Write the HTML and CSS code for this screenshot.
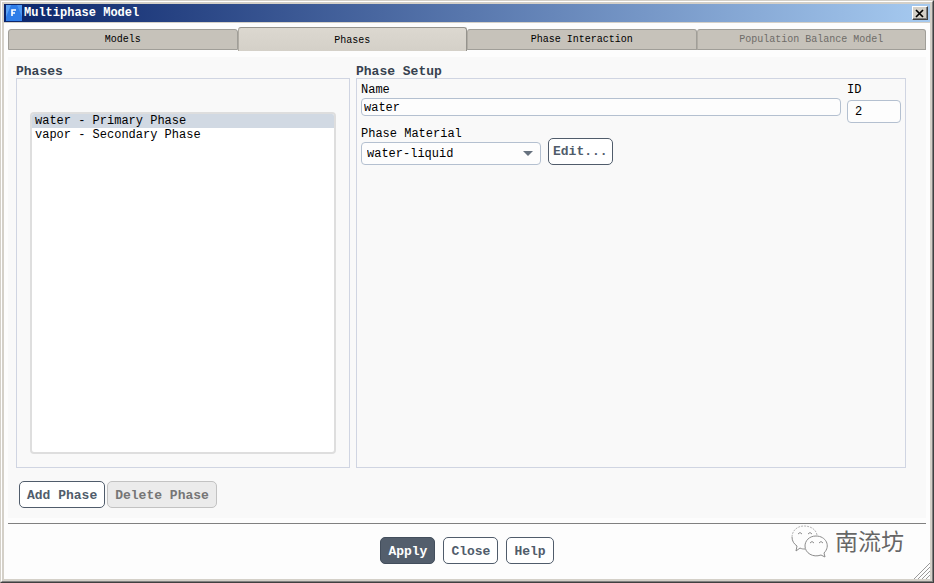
FILE: index.html
```html
<!DOCTYPE html>
<html lang="en">
<head>
<meta charset="utf-8">
<title>Multiphase Model</title>
<link rel="stylesheet" href="styles.css">
</head>
<body>
<div class="window">
  <header class="titlebar">
    <svg class="app-icon" viewBox="0 0 16 16" aria-hidden="true">
      <rect width="16" height="16" fill="#2f7de8"/>
      <path d="M0 0h5L0 12z" fill="#5aa2f5"/>
      <path d="M11 0h5v12z" fill="#4a96f2"/>
      <path d="M6 11V5h4M6 8h3" fill="none" stroke="#fff" stroke-width="1.6"/>
    </svg>
    <h1 class="title">Multiphase Model</h1>
    <button class="window-close" type="button" aria-label="Close window">
      <svg viewBox="0 0 10 9" aria-hidden="true"><path d="M1 1l7 7M8 1l-7 7" stroke="#000" stroke-width="1.7"/></svg>
    </button>
  </header>
  <nav class="tabs" role="tablist">
    <button class="tab" type="button" role="tab">Models</button>
    <button class="tab tab-active" type="button" role="tab" aria-selected="true">Phases</button>
    <button class="tab" type="button" role="tab">Phase Interaction</button>
    <button class="tab" type="button" role="tab" disabled>Population Balance Model</button>
  </nav>
  <main class="panel">
    <div class="columns">
      <section class="column column-phases">
        <h2 class="heading" id="phases-heading">Phases</h2>
        <div class="group group-list">
          <select class="phase-list" size="2" aria-labelledby="phases-heading">
            <option selected>water - Primary Phase</option>
            <option>vapor - Secondary Phase</option>
          </select>
        </div>
      </section>
      <section class="column column-setup">
        <h2 class="heading">Phase Setup</h2>
        <div class="group group-setup">
          <div class="row">
            <div class="field field-name">
              <label for="name">Name</label>
              <input class="input" id="name" type="text" value="water">
            </div>
            <div class="field field-id">
              <label for="phase-id">ID</label>
              <input class="input input-tall" id="phase-id" type="text" value="2">
            </div>
          </div>
          <div class="row row-material">
            <div class="field field-material">
              <label for="material">Phase Material</label>
              <div class="dropdown">
                <select class="input input-tall" id="material"><option>water-liquid</option></select>
              </div>
            </div>
            <button class="button button-edit" type="button">Edit...</button>
          </div>
        </div>
      </section>
    </div>
    <div class="list-actions">
      <button class="button" type="button">Add Phase</button>
      <button class="button" type="button" disabled>Delete Phase</button>
    </div>
  </main>
  <footer class="footer">
    <button class="button button-primary" type="button">Apply</button>
    <button class="button" type="button">Close</button>
    <button class="button" type="button">Help</button>
    <div class="watermark">
      <svg class="watermark-icon" viewBox="0 0 38 34" aria-hidden="true" fill="none" stroke="#8c8c8c">
        <path d="M26 10C25 4 19 1 13 1 6 1 1 6 1 12" stroke="#b4b4b4" stroke-dasharray="2 1"/>
        <path d="M1 12c0 4 2 7 5 9l-1 5 4-3c2 1 3 1 5 1"/>
        <path d="M25 11c-7 0-11 5-11 10 0 7 8 12 16 9l4 2-1-4c7-7 2-17-8-17z" fill="#fdfdfd"/>
        <path d="M7 9q2-3 4 0M17 9q2-3 4 0M19 18q2-3 4 0M28 18q2-3 4 0"/>
      </svg>
      <span lang="zh">南流坊</span>
    </div>
    <svg class="grip" viewBox="0 0 16 16" aria-hidden="true"><path d="M0 16L16 0M4 16L16 4M8 16l8-8M12 16l4-4" stroke="#999"/></svg>
  </footer>
</div>
</body>
</html>
```
FILE: styles.css
```css
* {
  box-sizing: border-box;
}

body {
  margin: 0;
  min-height: 100vh;
  display: flex;
  font: 12px/13px "Liberation Mono", monospace;
  color: #000;
  background: #d4d0c8;
  border: 1px solid;
  border-color: #d4d0c8 #404040 #404040 #d4d0c8;
}

button,
input,
select {
  font: inherit;
  color: inherit;
  margin: 0;
}

.window {
  flex: 1;
  min-width: 0;
  display: flex;
  flex-direction: column;
  padding: 2px;
  border: 1px solid;
  border-color: #fff #808080 #808080 #fff;
  background: linear-gradient(#fdfdfd, #fdfdfd) content-box;
}

.titlebar {
  display: flex;
  align-items: center;
  height: 19px;
  padding: 0 2px;
  border-bottom: 1px solid #d4d0c8;
  background: linear-gradient(to right, #0a246a, #a6caf0);
}

.app-icon {
  width: 16px;
  height: 16px;
}

.title {
  flex: 1;
  margin: 0 2px;
  font-size: 12px;
  font-weight: bold;
  color: #fff;
}

.window-close {
  display: flex;
  align-items: center;
  justify-content: center;
  width: 16px;
  height: 14px;
  padding: 0;
  background: #d4d0c8;
  border: 1px solid;
  border-color: #fff #404040 #404040 #fff;
  box-shadow: inset -1px -1px #808080;
}

.window-close svg {
  width: 10px;
  height: 9px;
}

.tabs {
  display: flex;
  align-items: center;
  height: 28px;
  padding: 4px 4px 0;
}

.tab {
  flex: 1;
  height: 21px;
  padding: 1px 0 0;
  font-size: 10px;
  background: #c6c2ba;
  border: 1px solid #a09e98;
  border-radius: 3px 3px 0 0;
}

.tab + .tab {
  border-left-color: #b0aca4;
}

.tab-active {
  height: 24px;
  background: linear-gradient(#dcd8d0, #d4d0c8);
  border-color: #95938d;
  border-bottom: 0;
}

.tab:disabled {
  color: #6e6c68;
}

.panel {
  flex: 1;
  display: flex;
  flex-direction: column;
  margin: 6px 4px 5px;
  padding: 8px 20px 10px 8px;
  background: #f9f9f9;
}

.columns {
  flex: 1;
  display: flex;
  gap: 6px;
}

.column {
  min-width: 0;
  display: flex;
  flex-direction: column;
}

.column-phases {
  flex: 334;
}

.column-setup {
  flex: 550;
}

.heading {
  margin: 0;
  font-size: 13px;
  font-weight: bold;
  color: #36414f;
}

.group {
  flex: 1;
  display: flex;
  flex-direction: column;
  border: 1px solid #d0d5e2;
}

.group-list {
  padding: 33px 13px 13px;
}

.group-setup {
  padding: 5px 4px 4px;
  gap: 5px;
}

.phase-list {
  flex: 1;
  width: 100%;
  padding: 0;
  background: #fff;
  border: 2px solid #dedede;
  border-radius: 4px;
  outline: 0;
}

.phase-list option {
  min-height: 13px;
  padding: 0 3px;
  color: #000;
}

.phase-list option:checked {
  background: linear-gradient(#d1d9e3, #d1d9e3);
  color: #000;
}

.row {
  display: flex;
  align-items: flex-start;
  gap: 6px;
}

.row-material {
  align-items: flex-end;
  gap: 7px;
}

.field {
  display: flex;
  flex-direction: column;
  gap: 1px;
}

.field-name {
  flex: 1;
}

.field-id {
  width: 54px;
  gap: 3px;
}

.field-material {
  width: 180px;
}

.input {
  width: 100%;
  height: 18px;
  padding: 2px 2px 0;
  background: #fdfdfd;
  border: 1px solid #b4c0d0;
  border-radius: 4px;
}

.input-tall {
  height: 23px;
  padding: 1px 7px 0;
}

.dropdown {
  position: relative;
}

.dropdown select {
  display: block;
  appearance: none;
  padding: 2px 5px 0;
}

.dropdown::after {
  content: "";
  position: absolute;
  right: 8px;
  top: 9px;
  border: 5px solid transparent;
  border-top-color: #66717e;
  border-bottom: 0;
  pointer-events: none;
}

.button {
  height: 27px;
  padding: 1px 7px 0;
  font-size: 13px;
  font-weight: bold;
  color: #505c6b;
  background: #fff;
  border: 1px solid #505c6b;
  border-radius: 5px;
}

.button:disabled {
  color: #767676;
  background: #ebebeb;
  border-color: #c2c2c2;
}

.button-primary {
  color: #fff;
  background: #535e6c;
  border-color: #434e5c;
}

.button-edit {
  padding: 0 4px;
}

.list-actions {
  display: flex;
  gap: 2px;
  margin-top: 13px;
  padding-left: 3px;
}

.footer {
  position: relative;
  display: flex;
  justify-content: center;
  gap: 8px;
  margin: 0 4px;
  padding: 13px 0 15px;
  border-top: 1px solid #808080;
}

.watermark {
  position: absolute;
  right: 22px;
  top: 1px;
  display: flex;
  align-items: center;
  gap: 6px;
  font: 23px/30px "Noto Sans CJK SC", sans-serif;
  color: #666;
}

.watermark span {
  padding-bottom: 4px;
}

.watermark-icon {
  width: 38px;
  height: 34px;
}

.grip {
  position: absolute;
  right: -4px;
  bottom: 0;
  width: 16px;
  height: 16px;
}
```
